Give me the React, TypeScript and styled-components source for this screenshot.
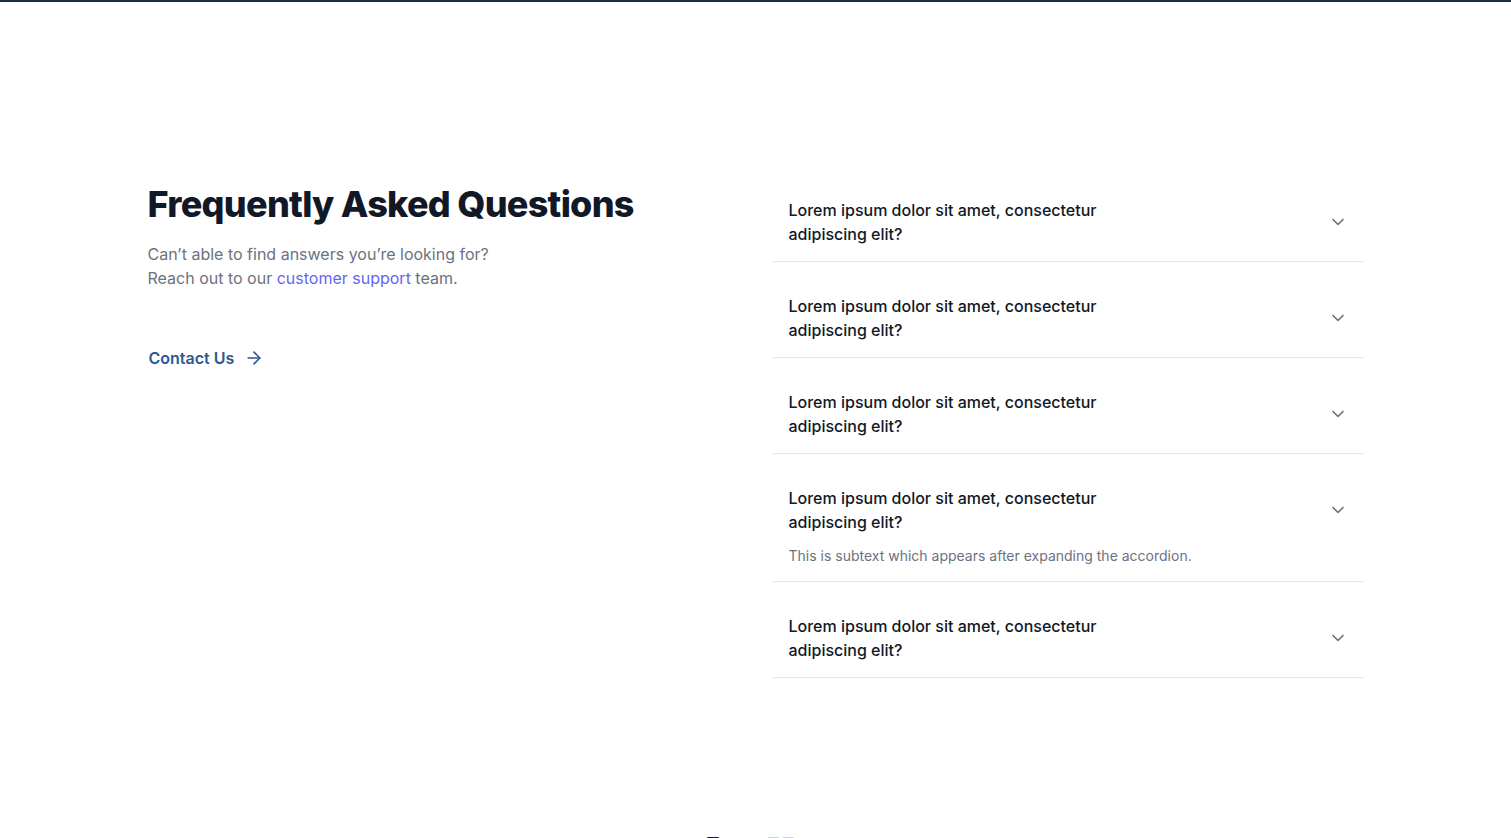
import React, { FunctionComponent } from 'react';
import styled, { createGlobalStyle } from 'styled-components';

type Faq = {
  question: string;
  answer?: string;
  open?: boolean;
};

const faqs: Faq[] = [
  { question: 'Lorem ipsum dolor sit amet, consectetur adipiscing elit?' },
  { question: 'Lorem ipsum dolor sit amet, consectetur adipiscing elit?' },
  { question: 'Lorem ipsum dolor sit amet, consectetur adipiscing elit?' },
  {
    question: 'Lorem ipsum dolor sit amet, consectetur adipiscing elit?',
    answer: 'This is subtext which appears after expanding the accordion.',
    open: true,
  },
  { question: 'Lorem ipsum dolor sit amet, consectetur adipiscing elit?' },
];

const ChevronDown = () => (
  <svg width="20" height="20" viewBox="0 0 24 24" fill="none" stroke="currentColor" strokeWidth="2" strokeLinecap="round" strokeLinejoin="round">
    <path d="m6 9 6 6 6-6" />
  </svg>
);

const ArrowRight = () => (
  <svg width="20" height="20" viewBox="0 0 24 24" fill="none" stroke="currentColor" strokeWidth="2" strokeLinecap="round" strokeLinejoin="round">
    <path d="M5 12h14" />
    <path d="m12 5 7 7-7 7" />
  </svg>
);

const AccordionItem: FunctionComponent<{ faq: Faq }> = ({ faq }) => (
  <Item>
    <ItemHead>
      <Question>{faq.question}</Question>
      <Chevron>
        <ChevronDown />
      </Chevron>
    </ItemHead>
    {faq.open && faq.answer && <Answer>{faq.answer}</Answer>}
  </Item>
);

export default function App() {
  return (
    <>
      <GlobalStyle />
      <TopBar />
      <Section>
        <Container>
          <Intro>
            <Heading>Frequently Asked Questions</Heading>
            <Lead>
              Can’t able to find answers you’re looking for?
              <br />
              Reach out to our <SupportLink href="#">customer support</SupportLink> team.
            </Lead>
            <ContactButton href="#">
              Contact Us
              <ArrowRight />
            </ContactButton>
          </Intro>
          <List>
            {faqs.map((faq, i) => (
              <AccordionItem key={i} faq={faq} />
            ))}
          </List>
        </Container>
      </Section>
      <NextSection>
        <svg width="100" height="20" viewBox="0 0 100 20">
          <path d="M2 10a10 10 0 0 1 16 -7" stroke="#111827" strokeWidth="4" fill="none" />
          <rect x="67" y="0" width="11" height="20" fill="#d1d5db" />
          <rect x="82" y="0" width="11" height="20" fill="#d1d5db" />
        </svg>
      </NextSection>
    </>
  );
}

const GlobalStyle = createGlobalStyle`
  * { box-sizing: border-box; }
  body {
    margin: 0;
    background: #ffffff;
    font-family: Inter, "Noto Sans", "Liberation Sans", sans-serif;
    color: #111827;
    -webkit-font-smoothing: antialiased;
    overflow: hidden;
  }
`;

const TopBar = styled.div`
  height: 2px;
  background: #1c2e44;
`;

const Section = styled.section`
  padding: 164px 0 159px;
`;

const Container = styled.div`
  max-width: 1216px;
  margin: 0 auto;
  display: grid;
  grid-template-columns: 1fr 591px;
  align-items: start;
`;

const Intro = styled.div`
  padding-top: 18px;
`;

const Heading = styled.h2`
  margin: 0;
  font-size: 36px;
  line-height: 40px;
  font-weight: 800;
  letter-spacing: -0.02em;
  color: #111827;
`;

const Lead = styled.p`
  margin: 18px 0 0;
  font-size: 16px;
  line-height: 24px;
  color: #6b7280;
`;

const SupportLink = styled.a`
  color: #6366f1;
  text-decoration: none;
`;

const ContactButton = styled.a`
  margin-top: 56px;
  margin-left: 1px;
  display: inline-flex;
  align-items: center;
  gap: 10px;
  font-size: 16px;
  line-height: 24px;
  font-weight: 600;
  color: #2b5a92;
  text-decoration: none;
`;

const List = styled.div`
  display: flex;
  flex-direction: column;
`;

const Item = styled.div`
  padding: 32px 16px 15px;
  border-bottom: 1px solid #e5e7eb;
`;

const ItemHead = styled.div`
  display: flex;
  align-items: center;
  justify-content: space-between;
  gap: 24px;
`;

const Question = styled.div`
  max-width: 320px;
  font-size: 16px;
  line-height: 24px;
  font-weight: 500;
  color: #111827;
`;

const Chevron = styled.span`
  display: flex;
  color: #6b7280;
`;

const Answer = styled.p`
  margin: 12px 0 0;
  font-size: 14px;
  line-height: 20px;
  color: #6b7280;
`;

const NextSection = styled.div`
  display: flex;
  justify-content: center;
  padding-right: 10px;
`;
